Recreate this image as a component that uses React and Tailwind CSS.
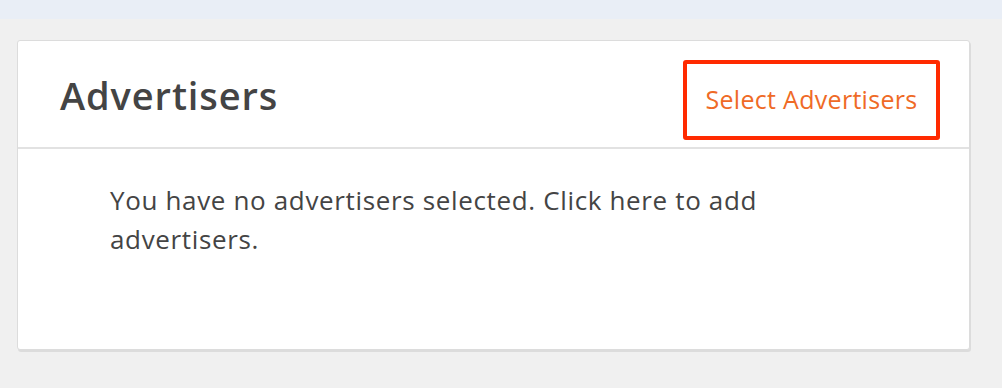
export default function App() {
  return (
    <div className="min-h-[388px] bg-[#f0f0f0] font-['Open_Sans',sans-serif]">
      <div className="h-[19px] bg-[#e9eef6]" />
      <div className="ml-[17px] mt-[21px] w-[953px] h-[310px] bg-white rounded-[3px] border border-[#dcdcdc] shadow-[1px_2px_0_#dcdcdc] flex flex-col">
        <div className="h-[108px] flex items-center justify-between pl-[42px] pr-[29px] border-b-2 border-[#e2e2e2]">
          <h2 className="pt-[2px] text-[38px] font-semibold text-[#444] tracking-[0.9px]">Advertisers</h2>
          <button className="self-start mt-[19px] h-[80px] w-[257px] border-4 border-[#ff2a00] rounded-[3px] text-[25px] tracking-[0.3px] text-[#ef6a26] flex items-center justify-center">
            Select Advertisers
          </button>
        </div>
        <p className="pl-[92px] pt-[32px] w-[810px] text-[26px] tracking-[0.65px] leading-[39px] text-[#444]">
          You have no advertisers selected. Click here to add advertisers.
        </p>
      </div>
    </div>
  );
}
